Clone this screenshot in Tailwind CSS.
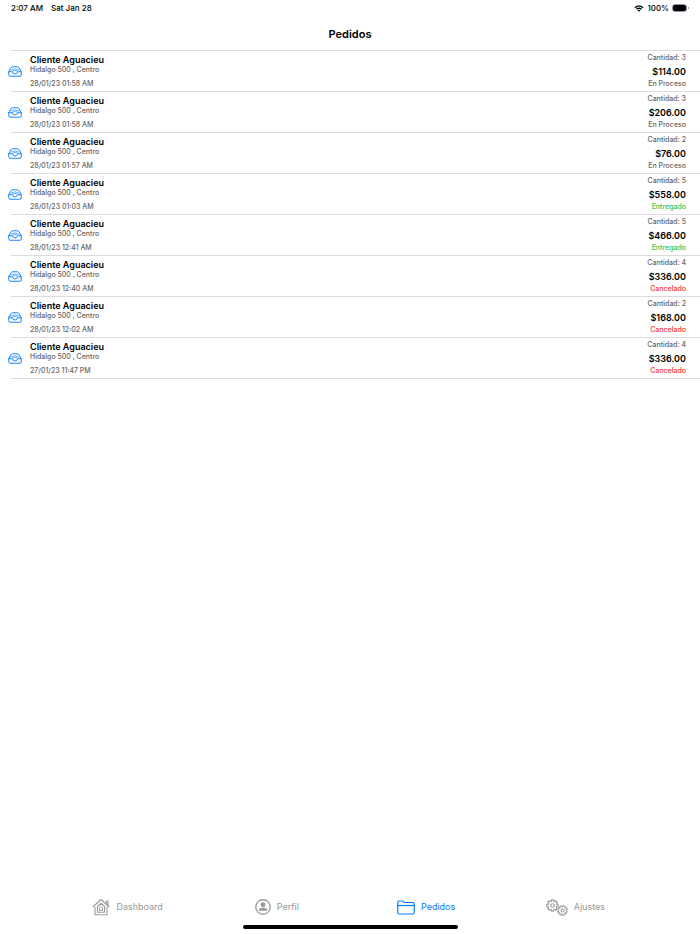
<!DOCTYPE html>
<html lang="es">
<head>
    <meta charset="UTF-8">
    <meta name="viewport" content="width=device-width, initial-scale=1.0">
    <title>Pedidos</title>
    <script src="https://cdn.jsdelivr.net/npm/@tailwindcss/browser@4"></script>
</head>
<body class="bg-white text-black font-['Inter','Liberation_Sans',sans-serif]">
    <!-- Icons -->
    <svg class="hidden">
        <symbol id="icon-tray" viewBox="0 0 28 22">
            <g fill="none" stroke="currentColor" stroke-width="1.800" stroke-linejoin="round" stroke-linecap="round">
                <path d="M1.500 11.500 L5.500 4 Q7 1.500 10 1.500 H18 Q21 1.500 22.500 4 L26.500 11.500 V18 Q26.500 20.500 24 20.500 H4 Q1.500 20.500 1.500 18 Z"/>
                <path d="M1.500 11.500 H9 Q10 16 14 16 Q18 16 19 11.500 H26.500"/>
                <path d="M5.500 8 Q14 3 22.500 8" stroke-width="1.200"/>
                <path d="M9 10 Q14 6.500 19 10" stroke-width="1.200"/>
            </g>
        </symbol>
        <symbol id="icon-wifi" viewBox="0 0 20 15">
            <g fill="none" stroke="currentColor" stroke-width="2.800">
                <path d="M1.200 5.800 Q10 -2.300 18.800 5.800"/>
                <path d="M4.600 9.300 Q10 4.400 15.400 9.300"/>
            </g>
            <path d="M6.800 11.400 Q10 8.800 13.200 11.400 L10 14.600 Z" fill="currentColor"/>
        </symbol>
        <symbol id="icon-home" viewBox="0 0 36 36">
            <g fill="none" stroke="currentColor" stroke-width="2.200" stroke-linejoin="round" stroke-linecap="round">
                <path d="M2 17.500 L18 3 L34 17.500"/>
                <path d="M28.500 11.500 V6 H32 V15"/>
                <path d="M6 18 V33.500 H30 V18"/>
                <path d="M11 28.500 V17 L18 10.500 L25 17 V28.500 Z"/>
            </g>
            <path d="M15 25 V19.500 L18 16.500 L21 19.500 V25 Z" fill="none" stroke="currentColor" stroke-width="1.800"/>
        </symbol>
        <symbol id="icon-person" viewBox="0 0 32 32">
            <circle cx="16" cy="16" r="14.500" fill="none" stroke="currentColor" stroke-width="2.600"/>
            <circle cx="16" cy="11.500" r="4.800" fill="currentColor"/>
            <path d="M7 23.500 Q7.500 17.500 16 17.500 Q24.500 17.500 25 23.500 Z" fill="currentColor"/>
        </symbol>
        <symbol id="icon-folder" viewBox="0 0 36 30">
            <g fill="none" stroke="currentColor" stroke-width="2.400" stroke-linejoin="round">
                <path d="M1.500 5 Q1.500 2 4.500 2 H10.500 Q12 2 13 3.200 L14.500 5 H31.500 Q34.500 5 34.500 8 V25 Q34.500 28 31.500 28 H4.500 Q1.500 28 1.500 25 Z"/>
                <path d="M1.500 11 H34.500"/>
            </g>
        </symbol>
        <path id="gear-tooth" d="M-3.370 -8.130 L-2.500 -8.400 L-2.200 -11.200 H2.200 L2.500 -8.400 L3.370 -8.130"/>
        <g id="gear">
            <use href="#gear-tooth"/>
            <use href="#gear-tooth" transform="rotate(45)"/>
            <use href="#gear-tooth" transform="rotate(90)"/>
            <use href="#gear-tooth" transform="rotate(135)"/>
            <use href="#gear-tooth" transform="rotate(180)"/>
            <use href="#gear-tooth" transform="rotate(225)"/>
            <use href="#gear-tooth" transform="rotate(270)"/>
            <use href="#gear-tooth" transform="rotate(315)"/>
            <circle r="3.600"/>
        </g>
        <symbol id="icon-gears" viewBox="0 0 44 34">
            <g fill="none" stroke="currentColor" stroke-width="2.200" stroke-linejoin="round" stroke-linecap="round">
                <use href="#gear" transform="translate(13 13)"/>
                <use href="#gear" transform="translate(33 23) scale(0.860) rotate(22)"/>
            </g>
        </symbol>
    </svg>

    <div class="flex min-h-screen flex-col">
        <!-- Status bar -->
        <div class="flex h-4 items-center justify-between px-[11px] text-[8px] font-medium">
            <div class="flex gap-2">
                <span>2:07 AM</span>
                <span>Sat Jan 28</span>
            </div>
            <div class="flex items-center gap-[3px]">
                <svg class="h-[7px] w-[10px]"><use href="#icon-wifi"/></svg>
                <span>100%</span>
                <div class="flex items-center gap-px">
                    <div class="h-2 w-[15px] rounded-[3px] border border-gray-400 bg-black"></div>
                    <div class="h-[2px] w-px bg-gray-400"></div>
                </div>
            </div>
        </div>

        <!-- Header -->
        <header class="flex h-[34px] items-center justify-center pt-px">
            <h1 class="text-[11px] leading-4 font-semibold">Pedidos</h1>
        </header>

        <!-- Orders -->
        <main class="flex-1">
            <ul id="ordersList" class="ml-[11px] border-t border-[#dcdcde]"></ul>
        </main>

        <!-- Tab bar -->
        <nav class="grid grid-cols-4 pr-[50px] pb-2 pl-[53px] text-[9px] text-[#999999]">
            <a href="#dashboard" class="flex h-5 items-center justify-center gap-[6px]">
                <svg class="size-[18px]"><use href="#icon-home"/></svg>
                Dashboard
            </a>
            <a href="#perfil" class="flex h-5 items-center justify-center gap-[6px]">
                <svg class="size-4"><use href="#icon-person"/></svg>
                Perfil
            </a>
            <a href="#pedidos" aria-current="page" class="flex h-5 items-center justify-center gap-[6px] text-[#007aff]">
                <svg class="h-[15px] w-[18px]"><use href="#icon-folder"/></svg>
                Pedidos
            </a>
            <a href="#ajustes" class="flex h-5 items-center justify-center gap-[6px]">
                <svg class="h-[17px] w-[22px]"><use href="#icon-gears"/></svg>
                Ajustes
            </a>
        </nav>
        <div class="mx-auto mb-[5px] h-1 w-[215px] rounded-full bg-black"></div>
    </div>

    <script>
    const statusColors = {
        'En Proceso': 'text-[#666666]',
        'Entregado': 'text-[#34c759]',
        'Cancelado': 'text-[#ff3b30]'
    };

    const orders = [
        { date: '28/01/23 01:58 AM', quantity: 3, total: '114.00', status: 'En Proceso' },
        { date: '28/01/23 01:58 AM', quantity: 3, total: '206.00', status: 'En Proceso' },
        { date: '28/01/23 01:57 AM', quantity: 2, total: '76.00', status: 'En Proceso' },
        { date: '28/01/23 01:03 AM', quantity: 5, total: '558.00', status: 'Entregado' },
        { date: '28/01/23 12:41 AM', quantity: 5, total: '466.00', status: 'Entregado' },
        { date: '28/01/23 12:40 AM', quantity: 4, total: '336.00', status: 'Cancelado' },
        { date: '28/01/23 12:02 AM', quantity: 2, total: '168.00', status: 'Cancelado' },
        { date: '27/01/23 11:47 PM', quantity: 4, total: '336.00', status: 'Cancelado' }
    ];

    // Render the order rows
    document.getElementById('ordersList').innerHTML = orders.map(order => `
        <li class="flex items-start justify-between border-b border-[#dcdcde] pb-[3px] pr-[14px] text-[7px] leading-[9px] font-medium text-[#666666]">
            <div class="-ml-[3px] flex items-center gap-2">
                <svg class="mt-1 h-[11px] w-[14px] text-[#007aff]"><use href="#icon-tray"/></svg>
                <div class="pt-1">
                    <h2 class="text-[9px] leading-[10px] font-semibold text-black">Cliente Aguacieu</h2>
                    <p>Hidalgo 500 , Centro</p>
                    <p class="mt-[5px]">${order.date}</p>
                </div>
            </div>
            <div class="pt-[2px] text-right">
                <p>Cantidad: ${order.quantity}</p>
                <p class="mt-1 text-[9px] leading-3 font-semibold text-black">$${order.total}</p>
                <p class="mt-px ${statusColors[order.status]}">${order.status}</p>
            </div>
        </li>
    `).join('');
    </script>
</body>
</html>
